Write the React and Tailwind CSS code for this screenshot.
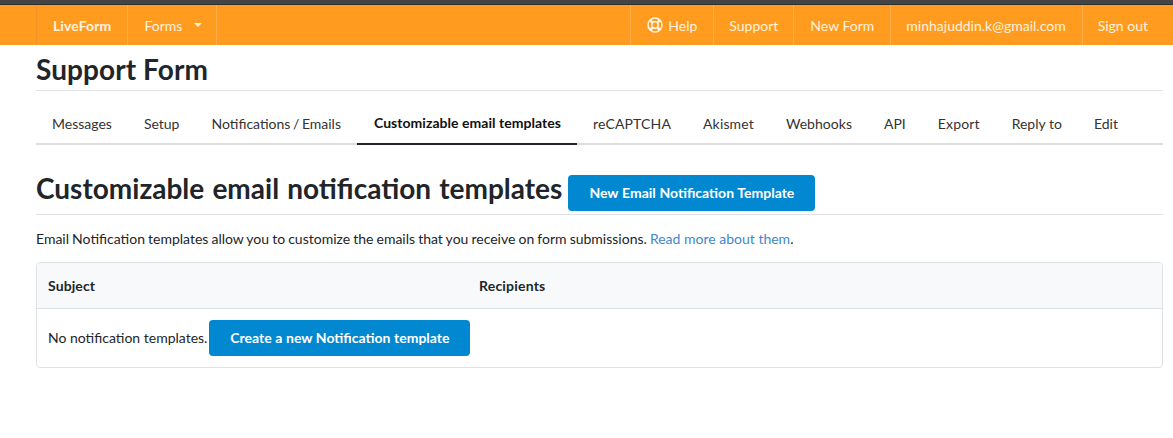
import React from "react";

const Sep = "border-r border-[#ffae4a]";

function LifeRing() {
  return (
    <svg width="16" height="16" viewBox="0 0 16 16" className="mr-[5px] text-[#fff3e0]" fill="none" stroke="currentColor">
      <circle cx="8" cy="8" r="7" strokeWidth="1.5" />
      <circle cx="8" cy="8" r="3.2" strokeWidth="1.5" />
      <path d="M3 3 5.7 5.7M13 3 10.3 5.7M3 13 5.7 10.3M13 13 10.3 10.3" strokeWidth="2.6" />
    </svg>
  );
}

const tabs = [
  ["Messages", "px-[16px]"],
  ["Setup", "px-[16px]"],
  ["Notifications / Emails", "px-[16px] [word-spacing:-1px]"],
  ["Customizable email templates", "pl-[17px] pr-[16px] tracking-[0.04px]"],
  ["reCAPTCHA", "px-[16px] tracking-[0.15px]"],
  ["Akismet", "px-[16px] tracking-[0.15px]"],
  ["Webhooks", "px-[16px] tracking-[0.03px]"],
  ["API", "px-[16px]"],
  ["Export", "px-[16px] tracking-[0.15px]"],
  ["Reply to", "px-[16px]"],
  ["Edit", "px-[16px]"],
];

export default function App() {
  return (
    <div className="min-h-[438px] bg-white text-[#212529] font-['Lato',sans-serif] text-[14px]">
      <div className="h-[5px] bg-[#444444] border-b border-[#2e2e2e]" />
      <nav className="h-[40px] bg-[#ff9c20] flex justify-between pl-[36px] pr-[10px] text-[#fff1dc] text-[14px]">
        <div className="flex border-l border-[#f0932a]">
          <a className={`flex items-center pl-[16px] pr-[16px] font-bold tracking-[0.1px] text-[#fff3e0] ${Sep}`}>LiveForm</a>
          <a className={`flex items-center pl-[16px] pr-[14px] ${Sep}`}>
            Forms
            <span className="ml-[12px] w-0 h-0 border-x-[4px] border-x-transparent border-t-[4px] border-t-[#fff1dc]" />
          </a>
        </div>
        <div className="flex border-l border-[#ffae4a]">
          <a className={`flex items-center pl-[16px] pr-[16px] ${Sep}`}><LifeRing />Help</a>
          <a className={`flex items-center px-[15px] ${Sep}`}>Support</a>
          <a className={`flex items-center px-[16px] ${Sep}`}>New Form</a>
          <a className={`flex items-center pl-[15px] pr-[16px] ${Sep}`}>minhajuddin.k@gmail.com</a>
          <a className="flex items-center px-[15px]">Sign out</a>
        </div>
      </nav>

      <main className="pl-[36px] pr-[10px]">
        <h1 className="h-[46px] flex items-center pt-[2px] text-[28px] font-bold leading-[34px] tracking-[0.08px] border-b border-[#dee2e6] text-[#212529]">Support Form</h1>
        <div className="mt-[10px] h-[44px] flex border-b-2 border-[#dddddd]">
          {tabs.map(([t, extra], i) => (
            <a
              key={t}
              className={`h-[44px] flex items-center ${extra} ${i === 3 ? "font-bold text-[#111111] border-b-2 border-[#212529]" : "text-[#333333]"}`}
            >
              {t}
            </a>
          ))}
        </div>

        <div className="mt-[30px] flex items-start border-b border-[#dee2e6] h-[40px]">
          <h2 className="text-[28px] font-bold leading-[26px] [word-spacing:1.35px] text-[#212529]">Customizable email notification templates</h2>
          <button className="ml-[6px] h-[36px] w-[247px] pb-[2px] rounded-[4px] bg-[#0288d1] text-white font-bold text-[14px] [word-spacing:0.3px]">New Email Notification Template</button>
        </div>

        <p className="mt-[13px] leading-[21px]">
          <span className="[word-spacing:-0.5px]">Email Notification templates allow you to customize the emails that you receive on form submissions. </span><a className="text-[#3f87c9]">Read more about them</a>.
        </p>

        <div className="mt-[13px] border border-[#dee2e6] rounded-[4px] overflow-hidden">
          <div className="h-[46px] flex items-center bg-[#f8f9fa] border-b border-[#dee2e6] px-[11px] font-bold">
            <span className="w-[431px] tracking-[0.1px]">Subject</span>
            <span className="tracking-[0.2px]">Recipients</span>
          </div>
          <div className="h-[58px] flex items-center px-[11px]">
            <span className="pb-[2px]">No notification templates.</span>
            <button className="ml-[2px] h-[36px] w-[261px] pb-[2px] rounded-[4px] bg-[#0288d1] text-white font-bold text-[14px] [word-spacing:0.2px]">Create a new Notification template</button>
          </div>
        </div>
      </main>
    </div>
  );
}
